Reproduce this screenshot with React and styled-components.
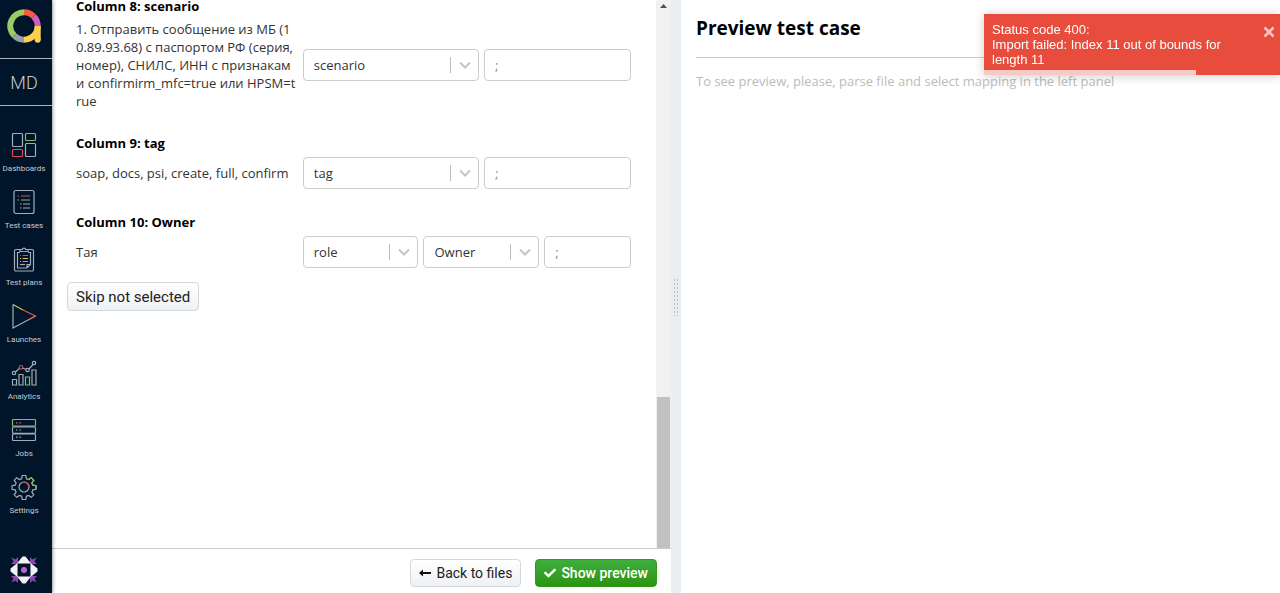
import styled, { createGlobalStyle } from "styled-components";
import { FaCheck } from "react-icons/fa";

const GlobalStyle = createGlobalStyle`
  * {
    box-sizing: border-box;
  }

  body {
    margin: 0;
    background: #fff;
    color: #000;
    font-family: "Open Sans", "Noto Sans", sans-serif;
    font-size: 13px;
    line-height: 18px;
  }
`;

const LogoIcon = () => (
  <svg width="34" height="34" viewBox="0 0 34 34" fill="none" strokeWidth="6">
    <path d="M17 3.3A13.7 13.7 0 0 1 26.7 7.3" stroke="#fb5a3e" />
    <path d="M26.7 7.3A13.7 13.7 0 0 1 30.7 17" stroke="#d35ebe" />
    <path d="M17 30.7A13.7 13.7 0 0 1 7.3 26.7" stroke="#97a0a8" />
    <path d="M7.3 26.7A13.7 13.7 0 0 1 17 3.3" stroke="#97cc64" />
    <path d="M17 30.7A13.7 13.7 0 0 0 30.7 17" stroke="#ffd050" />
    <path d="M30.7 17V30.8" stroke="#ffd050" />
    <circle cx="30.7" cy="30.8" r="3" fill="#ffd050" />
  </svg>
);

const DashboardsIcon = () => (
  <>
    <rect x="1.5" y="1.5" width="10" height="13" rx="1" />
    <rect x="14.5" y="1.5" width="10" height="7" rx="1" stroke="#7fc15e" />
    <rect x="1.5" y="17.5" width="10" height="7" rx="1" stroke="#e5484d" />
    <rect x="14.5" y="11.5" width="10" height="13" rx="1" />
  </>
);

const CasesIcon = () => (
  <>
    <rect x="3" y="1.5" width="20" height="23" rx="2" />
    <path d="M6.5 7H8M10 7H19" stroke="#e5484d" />
    <path d="M6.5 11H8M10 11H19" stroke="#7fc15e" />
    <path d="M9 15H10.5M12 15H19M9 19H10.5M12 19H19" />
  </>
);

const PlansIcon = () => (
  <>
    <path d="M9 3.5H5A1.5 1.5 0 0 0 3.5 5V23.5A1.5 1.5 0 0 0 5 25H21A1.5 1.5 0 0 0 22.5 23.5V5A1.5 1.5 0 0 0 21 3.5H17" />
    <path d="M9 5.5V3.5H11.2A1.9 1.9 0 0 1 14.8 3.5H17V5.5Z" />
    <path d="M9 6.5H6.5V22H16L19.5 18.5V6.5H17M16 22V18.5H19.5" />
    <path d="M9 9.5H10M11.5 9.5H17" stroke="#e5484d" />
    <path d="M9 12.5H10M11.5 12.5H17" stroke="#e8c35a" />
    <path d="M9 15.5H10M11.5 15.5H17" stroke="#7fc15e" />
    <path d="M9 18.5H14" />
  </>
);

const LaunchesIcon = () => (
  <>
    <path d="M2 1.5V25L24.5 13" />
    <path d="M2 1.5L12 7" stroke="#c3c95e" />
    <path d="M12 7L24.5 13L19 16" stroke="#e5584d" />
  </>
);

const AnalyticsIcon = () => (
  <>
    <path d="M1.5 25V19.5H5.5V25ZM8 25V14.5H12V25ZM21 25V10H25V25Z" />
    <path d="M14.5 25V17H18.5V25Z" stroke="#7fc15e" />
    <path d="M4.5 12L8.2 8.5M11.5 8L15 9.5M18 9L22 4.5" />
    <circle cx="3" cy="13" r="1.7" />
    <circle cx="10" cy="7.3" r="1.8" stroke="#e5484d" />
    <circle cx="16.5" cy="10" r="1.7" />
    <circle cx="23" cy="3" r="1.7" />
  </>
);

const JobsIcon = () => (
  <>
    <rect x="1.5" y="2.5" width="23" height="6.5" rx="1" stroke="#7fc15e" />
    <rect x="1.5" y="9.8" width="23" height="6.5" rx="1" />
    <rect x="1.5" y="17" width="23" height="6.5" rx="1" />
    <path d="M5 5.8H6.5M8.5 5.8H10" stroke="#e5584d" />
    <path d="M5 13H6.5M8.5 13H10M5 20.2H6.5M8.5 20.2H10" />
  </>
);

const SettingsIcon = () => (
  <>
    <path d="M11.2 1.5h3.6l.6 3.2 2.2.9 2.7-1.9 2.5 2.5-1.9 2.7.9 2.3 3.2.5v3.6l-3.2.6-.9 2.2 1.9 2.7-2.5 2.5-2.7-1.9-2.2.9-.6 3.2h-3.6l-.5-3.2-2.3-.9-2.7 1.9-2.5-2.5 1.9-2.7-.9-2.2-3.2-.6v-3.6l3.2-.5.9-2.3-1.9-2.7 2.5-2.5 2.7 1.9 2.3-.9z" />
    <path d="M17.6 5.6l2.7-1.9 2.5 2.5-1.9 2.7.9 2.3 3.2.5v3.6" stroke="#7fc15e" />
    <circle cx="13" cy="13" r="5" />
    <path d="M13 8a5 5 0 0 1 5 5" stroke="#e5484d" />
  </>
);

const ProjectIcon = () => (
  <svg width="28" height="28" viewBox="0 0 28 28">
    <path
      fill="#8e44ad"
      d="M8 1V8H1L3.5 5.5L1.5 1.5L5.5 3.5ZM20 1V8H27L24.5 5.5L26.5 1.5L22.5 3.5ZM8 27V20H1L3.5 22.5L1.5 26.5L5.5 24.5ZM20 27V20H27L24.5 22.5L26.5 26.5L22.5 24.5Z"
    />
    <path
      fill="#f4f2f7"
      d="M12.5 .5H15.5L21 7.5H7ZM12.5 27.5H15.5L21 20.5H7ZM.5 12.5V15.5L7.5 21V7ZM27.5 12.5V15.5L20.5 21V7Z"
    />
    <path fill="#001529" d="M8 8H20V20H8Z" />
    <circle cx="14" cy="14" r="3" fill="#b565d0" />
  </svg>
);

const menu = [
  { label: "Dashboards", Icon: DashboardsIcon },
  { label: "Test cases", Icon: CasesIcon },
  { label: "Test plans", Icon: PlansIcon },
  { label: "Launches", Icon: LaunchesIcon },
  { label: "Analytics", Icon: AnalyticsIcon },
  { label: "Jobs", Icon: JobsIcon },
  { label: "Settings", Icon: SettingsIcon },
];

const columns = [
  {
    title: "Column 8: scenario",
    sample: `1. Отправить сообщение из МБ (1
0.89.93.68) с паспортом РФ (серия,
номер), СНИЛС, ИНН с признакам
и confirmirm_mfc=true или HPSM=t
rue`,
    fields: ["scenario"],
  },
  {
    title: "Column 9: tag",
    sample: "soap, docs, psi, create, full, confirm",
    fields: ["tag"],
  },
  { title: "Column 10: Owner", sample: "Тая", fields: ["role", "Owner"] },
];

const Dropdown = ({ value, label }) => (
  <SelectBox>
    <select aria-label={label} defaultValue={value}>
      <option>{value}</option>
    </select>
    <Indicator>
      <svg width="12" height="8" viewBox="0 0 12 8" fill="none">
        <path d="M1 1.5L6 6.5L11 1.5" stroke="#c4c4c4" strokeWidth="2" />
      </svg>
    </Indicator>
  </SelectBox>
);

const ColumnMapping = ({ title, sample, fields }) => (
  <section>
    <ColumnTitle>{title}</ColumnTitle>
    <MappingRow>
      <Sample>{sample}</Sample>
      <Controls $several={fields.length > 1}>
        {fields.map((field) => (
          <Dropdown key={field} value={field} label={`${title} ${field}`} />
        ))}
        <Separator aria-label={`${title} separator`} placeholder=";" />
      </Controls>
    </MappingRow>
  </section>
);

const App = () => {
  return (
    <>
      <GlobalStyle />
      <Layout>
        <Sidebar>
          <LogoLink href="#home" aria-label="Home">
            <LogoIcon />
          </LogoLink>
          <UserLink href="#user">MD</UserLink>
          <Menu>
            {menu.map(({ label, Icon }) => (
              <MenuLink href={`#${label}`} key={label}>
                <svg
                  width="26"
                  height="26"
                  viewBox="0 0 26 26"
                  fill="none"
                  stroke="#a3acb8"
                  strokeWidth="1.2"
                >
                  <Icon />
                </svg>
                {label}
              </MenuLink>
            ))}
          </Menu>
          <ProjectLink href="#project" aria-label="Project">
            <ProjectIcon />
          </ProjectLink>
        </Sidebar>

        <ImportPane>
          <ScrollArea>
            <Mappings>
              {columns.map((column) => (
                <ColumnMapping key={column.title} {...column} />
              ))}
              <SkipButton>Skip not selected</SkipButton>
            </Mappings>
            <ScrollTrack>
              <ScrollArrow width="7" height="4" viewBox="0 0 7 4">
                <path d="M0 4L3.5 0L7 4Z" fill="#505050" />
              </ScrollArrow>
              <ScrollThumb />
            </ScrollTrack>
          </ScrollArea>
          <Footer>
            <Button>
              <svg width="12" height="8" viewBox="0 0 12 8" fill="#111">
                <path d="M0 4L4 .5V3H12V5H4V7.5Z" />
              </svg>
              Back to files
            </Button>
            <PrimaryButton>
              <FaCheck size={12} />
              Show preview
            </PrimaryButton>
          </Footer>
        </ImportPane>

        <Splitter>
          <Grip />
        </Splitter>

        <PreviewPane>
          <PreviewTitle>Preview test case</PreviewTitle>
          <Hint>
            To see preview, please, parse file and select mapping in the left
            panel
          </Hint>
        </PreviewPane>
      </Layout>

      <Toast role="alert">
        <ToastText>
          Status code 400:
          <br />
          Import failed: Index 11 out of bounds for length 11
        </ToastText>
        <CloseButton aria-label="Close">
          <svg width="12" height="12" viewBox="0 0 12 12">
            <path
              d="M1.5 1.5L10.5 10.5M10.5 1.5L1.5 10.5"
              stroke="#f8c8c3"
              strokeWidth="2.5"
            />
          </svg>
        </CloseButton>
        <ToastProgress />
      </Toast>
    </>
  );
};

const Layout = styled.div`
  display: grid;
  grid-template-columns: 52px minmax(0, 31fr) 10px minmax(0, 30fr);
  height: 100vh;
`;

const Sidebar = styled.nav`
  display: flex;
  flex-direction: column;
  background: #001529;
  box-shadow: 0 0 4px rgba(0, 0, 0, 0.6);
  z-index: 1;

  a {
    color: #c5cbd3;
    text-decoration: none;
    padding-right: 4px;
  }
`;

const LogoLink = styled.a`
  display: flex;
  align-items: center;
  justify-content: center;
  height: 59px;
  padding-bottom: 7px;
  border-bottom: 1px solid #a9b1ba;
`;

const UserLink = styled.a`
  height: 47px;
  border-bottom: 1px solid #a9b1ba;
  font-family: Roboto, sans-serif;
  font-size: 18px;
  font-weight: 300;
  line-height: 47px;
  text-align: center;
`;

const Menu = styled.div`
  display: flex;
  flex-direction: column;
  gap: 14px;
  flex: 1;
  padding-top: 26px;
`;

const MenuLink = styled.a`
  display: flex;
  flex-direction: column;
  align-items: center;
  gap: 5px;
  font-family: Roboto, sans-serif;
  font-size: 8px;
  line-height: 12px;
  white-space: nowrap;
`;

const ProjectLink = styled.a`
  display: flex;
  justify-content: center;
  padding-bottom: 9px;
`;

const ImportPane = styled.main`
  display: flex;
  flex-direction: column;
  min-height: 0;
`;

const ScrollArea = styled.div`
  display: flex;
  flex: 1;
  min-height: 0;
`;

const Mappings = styled.div`
  display: flex;
  flex-direction: column;
  gap: 27px;
  flex: 1;
  min-width: 0;
  padding: 0 25px 0 24px;
`;

const ColumnTitle = styled.h3`
  margin: 0 0 8px;
  font-size: 13px;
  font-weight: 700;
  line-height: 12px;
`;

const MappingRow = styled.div`
  display: grid;
  grid-template-columns: minmax(0, 2fr) minmax(0, 3fr);
  align-items: center;
  gap: 8px;
`;

const Sample = styled.div`
  margin-right: -4px;
  color: #333;
  white-space: pre-line;
  word-break: break-all;
`;

const Controls = styled.div`
  display: grid;
  grid-template-columns: ${(props) =>
    props.$several
      ? "minmax(0, 4fr) minmax(0, 4fr) minmax(0, 3fr)"
      : "minmax(0, 6fr) minmax(0, 5fr)"};
  gap: 5px;
`;

const SelectBox = styled.div`
  display: grid;
  height: 32px;
  border: 1px solid #ccc;
  border-radius: 4px;

  select {
    grid-area: 1 / 1;
    width: 100%;
    padding: 0 36px 0 10px;
    border: none;
    background: none;
    color: #333;
    font: inherit;
    appearance: none;
  }
`;

const Indicator = styled.span`
  grid-area: 1 / 1;
  display: flex;
  align-items: center;
  justify-self: end;
  align-self: center;
  height: 16px;
  padding: 0 7px 0 8px;
  border-left: 1px solid #bbb;
  pointer-events: none;
`;

const Separator = styled.input`
  width: 100%;
  height: 32px;
  padding: 0 10px;
  border: 1px solid #ccc;
  border-radius: 4px;
  font: inherit;

  &::placeholder {
    color: #888;
  }
`;

const Button = styled.button`
  display: flex;
  align-items: center;
  justify-content: center;
  gap: 5px;
  height: 28px;
  padding: 0 8px;
  border: 1px solid #d3d8dc;
  border-radius: 4px;
  background: linear-gradient(#fff, #eef1f4);
  color: #222;
  font-family: Roboto, sans-serif;
  font-size: 14px;
  white-space: nowrap;
`;

const SkipButton = styled(Button)`
  align-self: flex-start;
  height: 29px;
  margin: -13px 0 0 -9px;
  font-size: 15px;
`;

const PrimaryButton = styled(Button)`
  border-color: #2f9a1c;
  background: linear-gradient(#3fae3f, #2b9410);
  color: #fff;
  font-weight: 500;
`;

const ScrollTrack = styled.div`
  display: flex;
  flex-direction: column;
  align-items: center;
  justify-content: space-between;
  width: 15px;
  background: #f1f1f1;
`;

const ScrollArrow = styled.svg`
  margin-top: 4px;
`;

const ScrollThumb = styled.div`
  width: 13px;
  height: 27.5%;
  background: #c1c1c1;
`;

const Footer = styled.footer`
  display: flex;
  align-items: center;
  justify-content: flex-end;
  gap: 14px;
  height: 45px;
  padding: 3px 14px 0 0;
  border-top: 1px solid #ccc;
`;

const Splitter = styled.div`
  display: flex;
  align-items: center;
  justify-content: center;
  background: #ebeef1;
`;

const Grip = styled.span`
  width: 6px;
  height: 38px;
  background: radial-gradient(circle, #b9bdc1 1px, transparent 1px) 0 0 / 3px 4px;
`;

const PreviewPane = styled.aside`
  padding: 0 15px;
`;

const PreviewTitle = styled.h2`
  margin: 0 0 14px;
  border-bottom: 1px solid #ccc;
  font-size: 19px;
  font-weight: 700;
  line-height: 57px;
`;

const Hint = styled.p`
  margin: 0;
  color: #bbb;
`;

const Toast = styled.div`
  position: fixed;
  top: 14px;
  right: 0;
  display: flex;
  align-items: flex-start;
  width: 296px;
  padding: 8px 5px 8px 8px;
  background: #e74c3c;
  box-shadow: 0 1px 10px rgba(0, 0, 0, 0.2);
  color: #fff;
  font-family: "Liberation Sans", Arial, sans-serif;
  line-height: 15px;
  z-index: 2;
`;

const ToastText = styled.div`
  flex: 1;
  padding-right: 20px;
`;

const CloseButton = styled.button`
  display: flex;
  margin-top: 4px;
  padding: 0;
  border: none;
  background: none;
`;

const ToastProgress = styled.div`
  position: absolute;
  left: 0;
  bottom: 0;
  width: 71.5%;
  height: 5px;
  background: rgba(255, 255, 255, 0.7);
`;

export default App;
